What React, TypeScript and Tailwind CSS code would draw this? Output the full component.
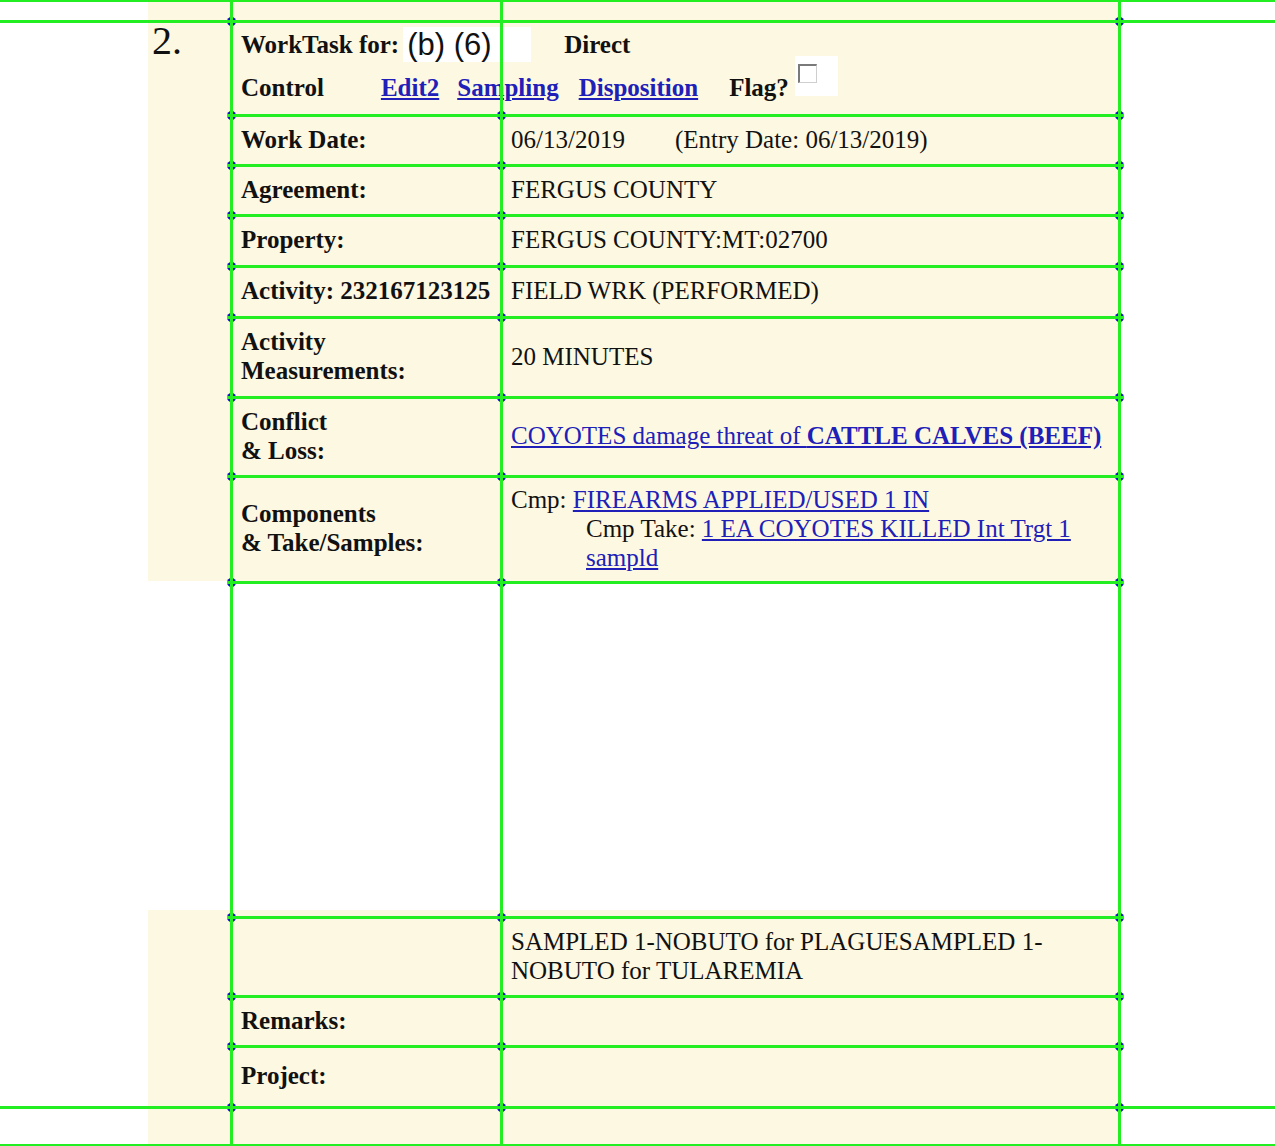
import React from 'react';

function Dot({ pos }: { pos: string }) {
  return (
    <div className={`absolute top-[-3px] w-[9px] h-[9px] z-20 ${pos}`}>
      <div className="absolute inset-0 rounded-full bg-[#1010c8]" />
      <div className="absolute left-0 right-0 top-[3px] h-[3px] bg-[#22ee22]" />
      <div className="absolute top-0 bottom-0 left-[3px] w-[3px] bg-[#22ee22]" />
    </div>
  );
}

const ALL = ['left-[227px]', 'left-[497px]', 'left-[1115px]'];

type RowProps = {
  h: string;
  full?: string;
  line?: boolean;
  extra?: string;
  dots?: string[];
  num?: React.ReactNode;
  label?: React.ReactNode;
  value?: React.ReactNode;
  merged?: React.ReactNode;
  numBg?: string;
  cellBg?: string;
};

function Row({
  h,
  full = '',
  line = true,
  extra = '',
  dots = ALL,
  num,
  label,
  value,
  merged,
  numBg = 'bg-[#fdf8e1]',
  cellBg = 'bg-[#fdf8e1]',
}: RowProps) {
  const t = full || (line ? 'border-t-[3px]' : '');
  return (
    <div className={`relative flex w-[1275px] shrink-0 ${h}`}>
      <div className={`w-[148px] shrink-0 bg-white border-[#22ee22] ${full} ${extra}`} />
      <div className={`w-[82px] shrink-0 border-[#22ee22] ${numBg} ${full} ${extra}`}>{num}</div>
      {merged ? (
        <div className={`relative w-[888px] shrink-0 border-l-[3px] border-[#22ee22] pl-[8px] ${t} ${cellBg} ${extra}`}>
          {merged}
          <div className="absolute left-[267px] top-0 bottom-0 w-[3px] bg-[#22ee22] z-10" />
        </div>
      ) : (
        <>
          <div className={`w-[270px] shrink-0 border-l-[3px] border-[#22ee22] pl-[8px] pb-[3px] flex flex-col justify-center font-bold ${t} ${cellBg} ${extra}`}>
            {label}
          </div>
          <div className={`w-[618px] shrink-0 border-l-[3px] border-[#22ee22] pl-[8px] pb-[3px] flex flex-col justify-center ${t} ${cellBg} ${extra}`}>
            {value}
          </div>
        </>
      )}
      <div className={`flex-1 bg-white border-l-[3px] border-[#22ee22] ${full} ${extra}`} />
      {dots.map((d) => (
        <Dot key={d} pos={d} />
      ))}
    </div>
  );
}

const link = 'text-[#2020b8] underline';

export default function App() {
  return (
    <div className="w-[1275px] h-[1146px] overflow-hidden bg-white font-['Liberation_Serif',serif] text-[25px] leading-[29px] text-[#111]">
      <Row h="h-[20px]" full="border-t-[2px]" dots={[]} />
      <Row
        h="h-[94px]"
        full="border-t-[3px]"
        dots={['left-[227px]', 'left-[1115px]']}
        num={<div className="pl-[4px] pt-[3px] text-[40px] leading-[30px]">2.</div>}
        merged={
          <div className="flex flex-col">
            <div className="mt-[3px] h-[36px] flex items-center whitespace-nowrap">
              <span className="font-bold">WorkTask for:</span>
              <div className="ml-[4px] w-[128px] h-[35px] bg-white flex items-center pl-[4px] font-['Liberation_Sans',sans-serif] text-[31px]">
                (b) (6)
              </div>
              <span className="font-bold ml-[33px]">Direct</span>
            </div>
            <div className="mt-[5px] h-[40px] flex items-center whitespace-nowrap">
              <span className="font-bold">Control</span>
              <span className={`font-bold ml-[57px] ${link}`}>Edit2</span>
              <span className={`font-bold ml-[18px] ${link}`}>Sampling</span>
              <span className={`font-bold ml-[20px] ${link}`}>Disposition</span>
              <span className="font-bold ml-[31px]">Flag?</span>
              <div className="self-start mt-[-11px] ml-[6px] w-[43px] h-[40px] bg-white">
                <div className="mt-[8px] ml-[3px] w-[19px] h-[19px] bg-white border-t-2 border-l-2 border-r border-b border-t-[#7a7a7a] border-l-[#7a7a7a] border-r-[#cfcfcf] border-b-[#cfcfcf]" />
              </div>
            </div>
          </div>
        }
      />
      <Row
        h="h-[50px]"
        label="Work Date:"
        value={
          <div className="whitespace-nowrap">
            <span>06/13/2019</span>
            <span className="ml-[50px]">(Entry Date: 06/13/2019)</span>
          </div>
        }
      />
      <Row h="h-[50px]" label="Agreement:" value="FERGUS COUNTY" />
      <Row h="h-[51px]" label="Property:" value="FERGUS COUNTY:MT:02700" />
      <Row h="h-[51px]" label={<span className="whitespace-nowrap">Activity: 232167123125</span>} value="FIELD WRK (PERFORMED)" />
      <Row
        h="h-[80px]"
        label={
          <>
            Activity
            <br />
            Measurements:
          </>
        }
        value="20 MINUTES"
      />
      <Row
        h="h-[79px]"
        label={
          <>
            Conflict
            <br />
            &amp; Loss:
          </>
        }
        value={
          <div className="whitespace-nowrap">
            <span className={link}>
              COYOTES damage threat of <b>CATTLE CALVES (BEEF)</b>
            </span>
          </div>
        }
      />
      <Row
        h="h-[106px]"
        label={
          <>
            Components
            <br />
            &amp; Take/Samples:
          </>
        }
        value={
          <div>
            <div>
              Cmp: <span className={link}>FIREARMS APPLIED/USED 1 IN</span>
            </div>
            <div className="ml-[75px]">
              Cmp Take: <span className={link}>1 EA COYOTES KILLED Int Trgt 1 sampld</span>
            </div>
          </div>
        }
      />
      <Row
        h="h-[335px]"
        numBg="bg-[linear-gradient(to_bottom,#ffffff_329px,#fdf8e1_329px)]"
        cellBg="bg-[linear-gradient(to_bottom,#ffffff_326px,#fdf8e1_326px)]"
      />
      <Row
        h="h-[79px]"
        value={
          <div className="whitespace-nowrap">
            SAMPLED 1-NOBUTO for PLAGUESAMPLED 1-
            <br />
            NOBUTO for TULAREMIA
          </div>
        }
      />
      <Row h="h-[50px]" label="Remarks:" />
      <Row h="h-[61px]" label="Project:" />
      <Row h="h-[40px]" full="border-t-[3px]" extra="border-b-[2px]" />
    </div>
  );
}
